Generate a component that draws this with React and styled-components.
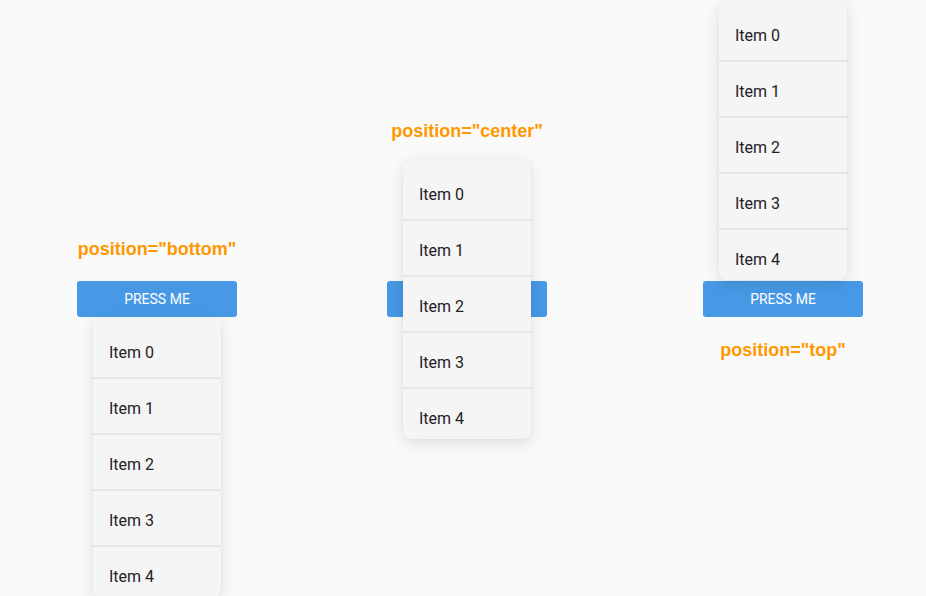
import React from "react";
import styled, { createGlobalStyle } from "styled-components";

const GlobalStyle = createGlobalStyle`
    html, body {
        margin: 0;
        background: #fafafa;
        overflow: hidden;
    }
`;

const Stage = styled.div`
    display: grid;
    grid-template-columns: 160px 150px 160px 156px 160px;
    grid-template-rows: 281px 36px auto;
    padding-left: 77px;
    height: 596px;
    box-sizing: border-box;
`;

const Label = styled.div`
    grid-column: ${p => p.$col};
    grid-row: ${p => (p.$below ? 3 : 1)};
    align-self: ${p => (p.$below ? "start" : "end")};
    margin: ${p => (p.$below ? `${p.$space}px 0 0` : `0 0 ${p.$space}px`)};
    text-align: center;
    white-space: nowrap;
    font-family: "Liberation Sans", Arial, sans-serif;
    font-weight: bold;
    font-size: 18px;
    line-height: 21px;
    color: #ff9800;
`;

const Anchor = styled.div`
    grid-column: ${p => p.$col};
    grid-row: 2;
    position: relative;
`;

const PressButton = styled.button`
    display: block;
    width: 160px;
    height: 36px;
    border: none;
    border-radius: 3px;
    background-color: #4799e6;
    color: #fff;
    font-family: Roboto, "Liberation Sans", sans-serif;
    font-size: 14px;
    padding: 0;
`;

const placements = {
    bottom: "top: calc(100% + 1px);",
    center: "top: calc(50% - 139.5px);",
    top: "bottom: calc(100% + 1px);",
};

const Menu = styled.ul`
    position: absolute;
    left: 16px;
    ${p => placements[p.$position]}
    width: 128px;
    height: 279px;
    margin: 0;
    padding: 3px 0 0;
    box-sizing: border-box;
    list-style: none;
    overflow: hidden;
    background: #f5f5f5;
    border-radius: 8px;
    box-shadow: 0 4px 18px rgba(0, 0, 0, 0.11), 0 1px 4px rgba(0, 0, 0, 0.04);
    z-index: 2;
`;

const MenuItem = styled.li`
    height: 56px;
    box-sizing: border-box;
    padding: 6px 16px 0;
    border-top: 2px solid transparent;
    font-family: Roboto, "Liberation Sans", sans-serif;
    font-size: 16px;
    line-height: 48px;
    color: #222;
    & + & {
        border-top-color: #e6e6e6;
    }
`;

const items = ["Item 0", "Item 1", "Item 2", "Item 3", "Item 4"];

const Dropdown = ({ position }) => (
    <Menu $position={position}>
        {items.map(item => (
            <MenuItem key={item}>{item}</MenuItem>
        ))}
    </Menu>
);

const App = () => {
    return (
        <>
            <GlobalStyle />
            <Stage>
                <Label $col={1} $space={21}>position="bottom"</Label>
                <Anchor $col={1}>
                    <PressButton>PRESS ME</PressButton>
                    <Dropdown position="bottom" />
                </Anchor>

                <Label $col={3} $space={139}>position="center"</Label>
                <Anchor $col={3}>
                    <PressButton>PRESS ME</PressButton>
                    <Dropdown position="center" />
                </Anchor>

                <Anchor $col={5}>
                    <PressButton>PRESS ME</PressButton>
                    <Dropdown position="top" />
                </Anchor>
                <Label $col={5} $below $space={23}>position="top"</Label>
            </Stage>
        </>
    );
};

export default App;
